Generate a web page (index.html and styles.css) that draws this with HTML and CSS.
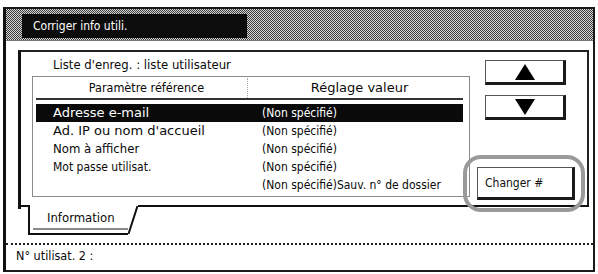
FILE: index.html
```html
<!DOCTYPE html>
<html lang="fr">
<head>
<meta charset="utf-8">
<title>Corriger info utili.</title>
<link rel="stylesheet" href="styles.css">
</head>
<body>
<div class="frame">
  <div class="titlebar"><div class="title">Corriger info utili.</div></div>
  <div class="main">
    <div class="panel">
      <div class="left">
        <div class="caption">Liste d'enreg. : liste utilisateur</div>
        <div class="table">
          <div class="thead">
            <div class="th th-a">Paramètre référence</div>
            <div class="th th-b">Réglage valeur</div>
          </div>
          <div class="rows">
            <div class="row sel"><span class="c1 wide">Adresse e-mail</span><span class="c2">(Non spécifié)</span></div>
            <div class="row"><span class="c1 wide">Ad. IP ou nom d'accueil</span><span class="c2">(Non spécifié)</span></div>
            <div class="row"><span class="c1 big">Nom à afficher</span><span class="c2">(Non spécifié)</span></div>
            <div class="row"><span class="c1">Mot passe utilisat.</span><span class="c2">(Non spécifié)</span></div>
            <div class="row"><span class="c1"></span><span class="c2">(Non spécifié)Sauv. n° de dossier</span></div>
          </div>
        </div>
      </div>
      <div class="side">
        <button class="btn arrow" type="button" aria-label="Haut">
          <svg width="20" height="16" viewBox="0 0 20 16"><polygon points="10,0 20,16 0,16" fill="#000"/></svg>
        </button>
        <button class="btn arrow down" type="button" aria-label="Bas">
          <svg width="20" height="16" viewBox="0 0 20 16"><polygon points="0,0 20,0 10,16" fill="#000"/></svg>
        </button>
        <div class="change-wrap">
          <button class="btn change" type="button">Changer #</button>
          <span class="ring"></span>
        </div>
      </div>
    </div>
    <div class="tabrow">
      <div class="seg-l"></div>
      <div class="tab"><span class="tab-label">Information</span></div>
      <svg class="slant" width="10" height="30" viewBox="0 0 10 30"><line x1="0.5" y1="29" x2="9.5" y2="1" stroke="#111" stroke-width="2"/></svg>
      <div class="seg-r"></div>
    </div>
  </div>
  <div class="status">N° utilisat. 2 :</div>
</div>
</body>
</html>
```

FILE: styles.css
```css
* { box-sizing: border-box; }

html, body {
  margin: 0;
  padding: 0;
  background: #fff;
}

body {
  font-family: "DejaVu Sans Condensed", "DejaVu Sans", Verdana, sans-serif;
  font-stretch: condensed;
  font-size: 12px;
  color: #0a0a0a;
}

.frame {
  margin: 7px 0 0 3px;
  width: 592px;
  height: 265px;
  border-top: 2px solid #1a1a1a;
  border-left: 3px solid #111;
  border-right: 2px solid #1a1a1a;
  border-bottom: 2px solid #1a1a1a;
  display: flex;
  flex-direction: column;
}

.titlebar {
  height: 32px;
  flex: none;
  padding: 5px 0 0 16px;
  background: repeating-conic-gradient(#3a3a3a 0 25%, #d8d8d8 0 50%) 0 0 / 2px 2px;
  border-bottom: 1px solid #777;
}

.title {
  width: 225px;
  height: 24px;
  background: #0c0c0c;
  color: #fff;
  font-size: 12px;
  line-height: 24px;
  padding-left: 11px;
}

.main {
  flex: none;
  height: 202px;
  padding: 9px 4px 8px 12px;
}

.panel {
  height: 155px;
  border-top: 2px solid #222;
  border-left: 3px solid #111;
  border-right: 2px solid #222;
  display: flex;
  gap: 7px;
  padding: 0 12px 0 11px;
}

.left {
  width: 438px;
  flex: none;
  display: flex;
  flex-direction: column;
}

.caption {
  height: 24px;
  line-height: 25px;
  padding-left: 21px;
  font-size: 13px;
}

.table {
  height: 121px;
  border: 1px solid #8a8a8a;
  padding: 0 6px 2px 3px;
}

.thead {
  height: 23px;
  display: flex;
  border-bottom: 2px solid #333;
}

.th {
  line-height: 20px;
  text-align: center;
  height: 20px;
  margin-top: 1px;
}

.th-a {
  width: 212px;
  flex: none;
  padding-left: 10px;
  font-size: 12.5px;
  border-right: 1px dotted #aaa;
}

.th-b {
  flex: 1;
  padding-left: 8px;
  font-family: "DejaVu Sans", Verdana, sans-serif;
  font-stretch: normal;
  font-size: 13px;
}

.rows {
  padding-top: 4px;
}

.row {
  height: 18px;
  line-height: 18px;
  display: flex;
  padding-left: 17px;
  white-space: nowrap;
}

.row.sel {
  background: #0a0a0a;
  color: #fff;
}

.c1 {
  width: 209px;
  flex: none;
}

.c1.wide {
  font-family: "DejaVu Sans", Verdana, sans-serif;
  font-stretch: normal;
  font-size: 13px;
}

.c1.big {
  font-size: 13px;
}

.c2 {
  flex: 1;
}

.side {
  width: 98px;
  flex: none;
  display: flex;
  flex-direction: column;
  padding-top: 8px;
}

.btn {
  display: flex;
  align-items: center;
  background: #fff;
  border-style: solid;
  border-color: #555 #1a1a1a #1a1a1a #555;
  border-width: 1px 3px 3px 1px;
  padding: 0;
  margin: 0;
  font: inherit;
  color: #111;
}

.arrow {
  width: 81px;
  height: 25px;
  margin-left: 8px;
  justify-content: center;
}

.arrow.down {
  margin-top: 10px;
}

.change-wrap {
  position: relative;
  margin-top: 47px;
}

.change {
  width: 98px;
  height: 33px;
  padding-left: 7px;
  font-size: 12px;
}

.ring {
  position: absolute;
  top: -12px;
  bottom: -12px;
  left: -14px;
  right: -10px;
  border: 4px solid #9a9a9a;
  border-radius: 18px;
  pointer-events: none;
}

.tabrow {
  display: flex;
  height: 30px;
}

.seg-l {
  flex: none;
  border-top: 2px solid #111;
  border-left: 3px solid #111;
  height: 2px;
  box-sizing: content-box;
  width: 7px;
}

.tab {
  width: 100px;
  flex: none;
  height: 30px;
  border-left: 2px solid #111;
  border-bottom: 2px solid #111;
  padding: 5px 0 0 17px;
  font-size: 13px;
  box-shadow: inset 3px -3px 0 #fff, inset 0 -5px 0 #8a8a8a;
}

.slant {
  flex: none;
  display: block;
}

.seg-r {
  flex: 1;
  border-top: 2px solid #111;
  height: 2px;
  box-sizing: content-box;
}

.status {
  flex: 1;
  border-top: 2px dotted #222;
  padding-left: 10px;
  line-height: 22px;
  font-size: 12.5px;
}
```
